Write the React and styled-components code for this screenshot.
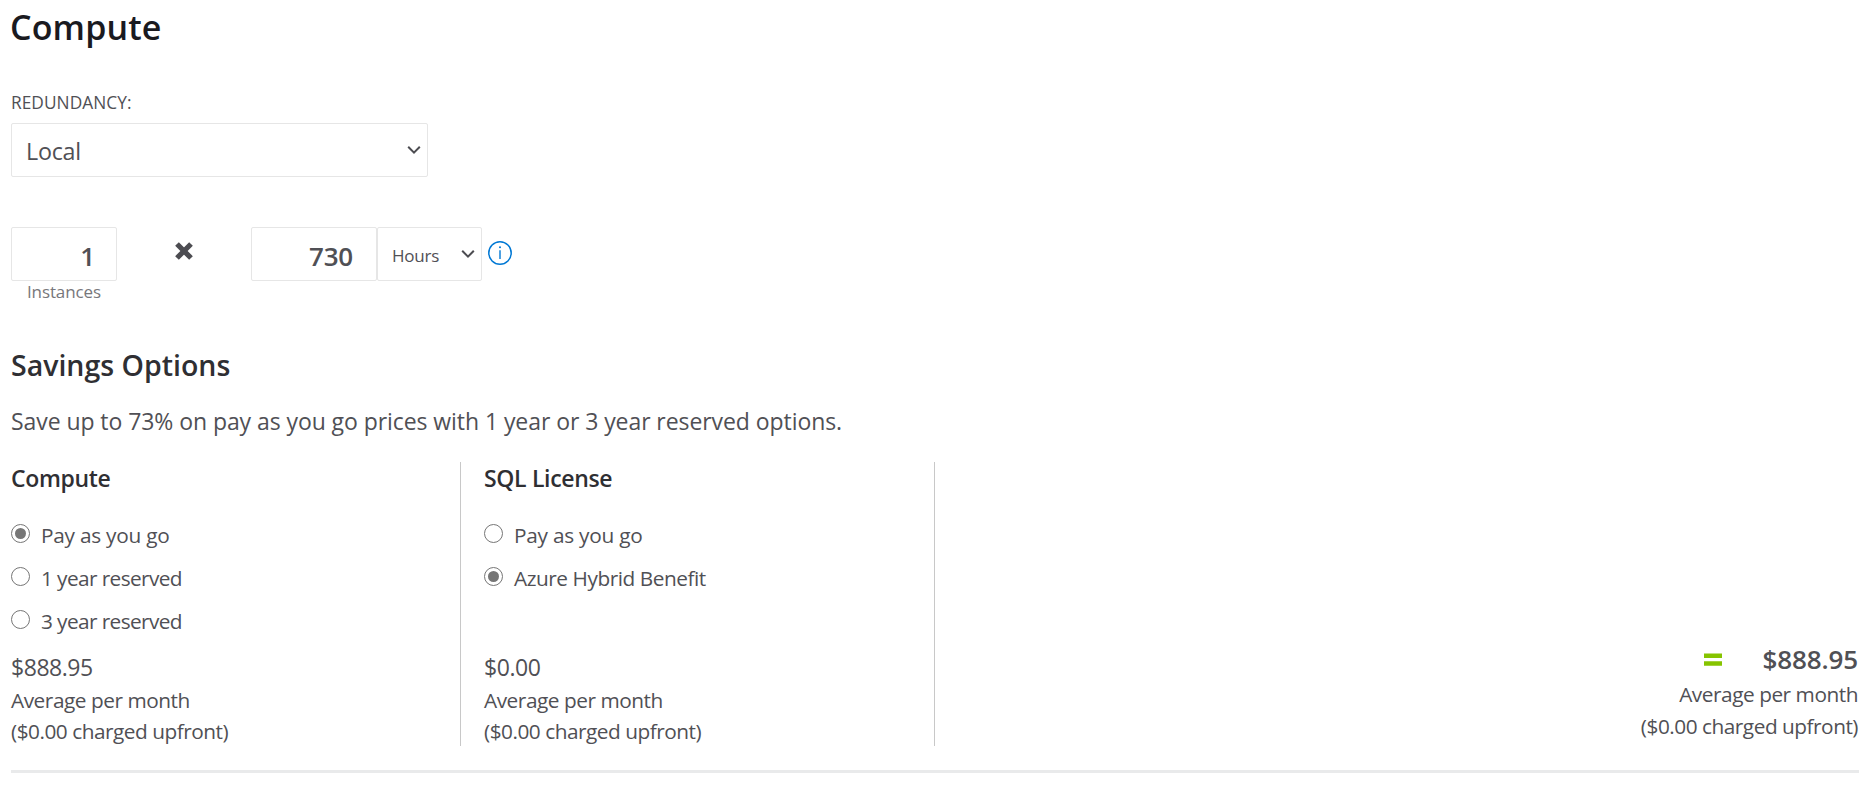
import React, { useState } from 'react';
import styled, { createGlobalStyle } from 'styled-components';

const GlobalStyle = createGlobalStyle`
  *, *::before, *::after { box-sizing: border-box; }
  body {
    margin: 0;
    background: #fff;
    color: #505055;
    font-family: "Segoe UI", "Open Sans", "Noto Sans", sans-serif;
  }
`;

const Page = styled.main`
  width: 1859px;
  padding: 3px 0 0 11px;
  display: flex;
  flex-direction: column;
`;

const Title = styled.h1`
  margin: 0 0 40px -1px;
  font-size: 34px;
  line-height: 48px;
  font-weight: 600;
  letter-spacing: 0.15px;
  color: #1a1a1f;
`;

const FieldLabel = styled.label`
  font-size: 17.3px;
  line-height: 24px;
  letter-spacing: 0.05px;
  margin-bottom: 8px;
`;

const Box = styled.div`
  display: flex;
  align-items: center;
  width: ${(p) => p.$width}px;
  height: 54px;
  border: 1px solid #e6e6e6;
  border-radius: 2px;
`;

const SelectBox = styled(Box)`
  justify-content: space-between;
  padding: 0 6px 0 14px;
  font-size: ${(p) => (p.$small ? 17 : 23.3)}px;
  letter-spacing: -0.25px;
`;

const SelectText = styled.span`
  padding-top: 2px;
`;

const NumberBox = styled(Box)`
  justify-content: flex-end;
  padding: 4px ${(p) => p.$right}px 0 0;
  font-size: 26px;
  font-weight: 600;
  letter-spacing: -0.2px;
`;

const QuantityRow = styled.div`
  display: flex;
  align-items: flex-start;
  margin: 50px 0 43px;
`;

const Quantity = styled.div`
  display: flex;
  flex-direction: column;
  align-items: center;
`;

const Caption = styled.span`
  font-size: 17px;
  line-height: 21px;
  letter-spacing: -0.1px;
  color: #77777b;
`;

const Times = styled.div`
  width: 134px;
  padding: 15px 0 0 58px;
  line-height: 0;
`;

const InfoIcon = styled.svg`
  margin: 14px 0 0 6px;
`;

const SectionTitle = styled.h2`
  margin: 0 0 20px;
  font-size: 28.5px;
  line-height: 40px;
  font-weight: 600;
  letter-spacing: 0;
  color: #2f2f33;
`;

const Lead = styled.p`
  margin: 0 0 25px;
  font-size: 23px;
  line-height: 32px;
  letter-spacing: -0.07px;
`;

const Options = styled.div`
  display: flex;
  height: 284px;
`;

const Column = styled.section`
  display: flex;
  flex-direction: column;
  width: ${(p) => p.$width}px;
  padding-left: ${(p) => p.$inset || 0}px;
  border-right: 1px solid #c8c8c8;
`;

const ColumnTitle = styled.h3`
  margin: 0 0 19px;
  font-size: 23px;
  line-height: 32px;
  font-weight: 600;
  letter-spacing: -0.33px;
  color: #2f2f33;
`;

const RadioRow = styled.label`
  display: flex;
  align-items: center;
  gap: 11px;
  height: 43px;
  font-size: 20.8px;
  line-height: 45px;
  letter-spacing: ${(p) => p.$tracking}px;
`;

const RadioInput = styled.input`
  appearance: none;
  display: grid;
  place-items: center;
  width: 19px;
  height: 19px;
  margin: 0 0 2px;
  border: 1px solid #767676;
  border-radius: 50%;

  &:checked::before {
    content: "";
    width: 11px;
    height: 11px;
    border-radius: 50%;
    background: #767676;
  }
`;

const RadioText = styled.span`
  padding-top: 2px;
`;

const Cost = styled.div`
  margin: auto 0 -1px;
`;

const Price = styled.div`
  margin-bottom: 3px;
  font-size: 23px;
  line-height: 30px;
  letter-spacing: -0.46px;
`;

const Note = styled.div`
  font-size: 20.8px;
  line-height: ${(p) => p.$line || 31}px;
  letter-spacing: ${(p) => p.$tracking}px;
`;

const Total = styled.div`
  margin: auto 1px 4px auto;
  text-align: right;
`;

const TotalPrice = styled.div`
  display: flex;
  justify-content: flex-end;
  align-items: center;
  gap: 40px;
  margin-bottom: 2px;
  font-size: 26px;
  line-height: 34px;
  font-weight: 600;
  letter-spacing: -0.1px;
`;

const Divider = styled.hr`
  width: 100%;
  height: 3px;
  margin: 24px 0 0;
  border: 0;
  background: #e9eaeb;
`;

function Chevron() {
  return (
    <svg width="14" height="10" viewBox="0 0 14 10" fill="none">
      <path d="M1.2 1.8 L7 7.6 L12.8 1.8" stroke="#4c4c51" strokeWidth="2" />
    </svg>
  );
}

function CostSummary({ line }) {
  return (
    <>
      <Note $line={line} $tracking={-0.46}>Average per month</Note>
      <Note $line={line} $tracking={-0.48}>($0.00 charged upfront)</Note>
    </>
  );
}

function SavingsColumn({ title, name, options, initial, price, width, inset }) {
  const [selected, setSelected] = useState(initial);
  return (
    <Column $width={width} $inset={inset}>
      <ColumnTitle>{title}</ColumnTitle>
      {options.map(([label, tracking]) => (
        <RadioRow key={label} $tracking={tracking}>
          <RadioInput type="radio" name={name} checked={selected === label} onChange={() => setSelected(label)} />
          <RadioText>{label}</RadioText>
        </RadioRow>
      ))}
      <Cost>
        <Price>{price}</Price>
        <CostSummary />
      </Cost>
    </Column>
  );
}

export default function App() {
  return (
    <>
      <GlobalStyle />
      <Page>
        <Title>Compute</Title>
        <FieldLabel>REDUNDANCY:</FieldLabel>
        <SelectBox $width={417}>
          <SelectText>Local</SelectText>
          <Chevron />
        </SelectBox>
        <QuantityRow>
          <Quantity>
            <NumberBox $width={106} $right={21}>1</NumberBox>
            <Caption>Instances</Caption>
          </Quantity>
          <Times>
            <svg width="18" height="18" viewBox="0 0 18 18">
              <path d="M2 2 L16 16 M16 2 L2 16" stroke="#4c4c51" strokeWidth="5.2" />
            </svg>
          </Times>
          <NumberBox $width={126} $right={23}>730</NumberBox>
          <SelectBox $width={105} $small>
            <SelectText>Hours</SelectText>
            <Chevron />
          </SelectBox>
          <InfoIcon width="24" height="24" viewBox="0 0 24 24" fill="none">
            <circle cx="12" cy="12" r="11.2" stroke="#0078d4" strokeWidth="1.5" />
            <path d="M12 9.2 V18" stroke="#0078d4" strokeWidth="1.4" />
            <circle cx="12" cy="6.3" r="1" fill="#0078d4" />
          </InfoIcon>
        </QuantityRow>
        <SectionTitle>Savings Options</SectionTitle>
        <Lead>Save up to 73% on pay as you go prices with 1 year or 3 year reserved options.</Lead>
        <Options>
          <SavingsColumn
            title="Compute"
            name="compute"
            width={450}
            options={[['Pay as you go', -0.24], ['1 year reserved', -0.6], ['3 year reserved', -0.6]]}
            initial="Pay as you go"
            price="$888.95"
          />
          <SavingsColumn
            title="SQL License"
            name="license"
            width={474}
            inset={23}
            options={[['Pay as you go', -0.24], ['Azure Hybrid Benefit', -0.45]]}
            initial="Azure Hybrid Benefit"
            price="$0.00"
          />
          <Total>
            <TotalPrice>
              <svg width="18" height="13" viewBox="0 0 18 13">
                <path d="M0 0.5H18V5H0Z M0 8.3H18V12.7H0Z" fill="#86c400" />
              </svg>
              $888.95
            </TotalPrice>
            <CostSummary line={32} />
          </Total>
        </Options>
        <Divider />
      </Page>
    </>
  );
}
